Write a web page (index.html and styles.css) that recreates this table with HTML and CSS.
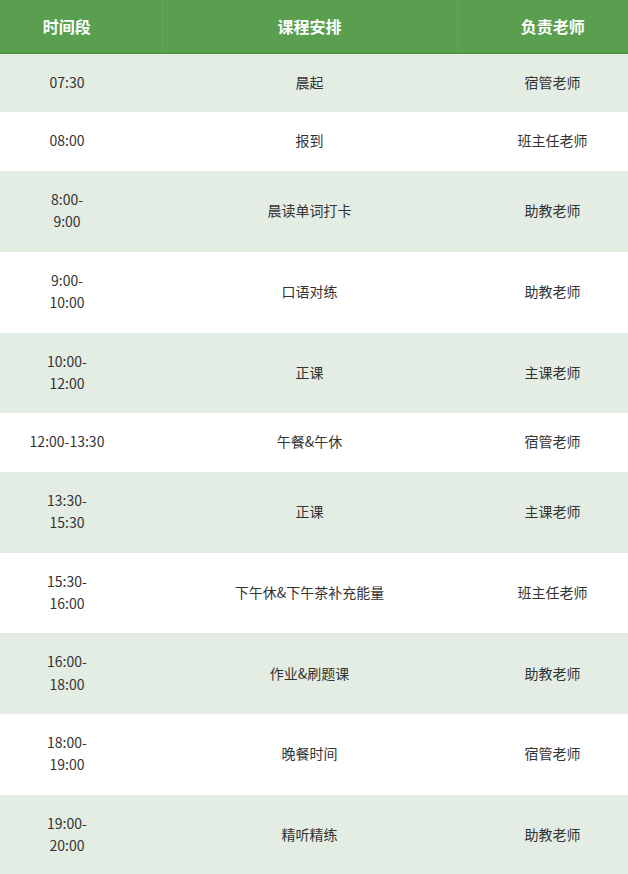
FILE: index.html
```html
<!DOCTYPE html>
<html lang="zh">
<head>
<meta charset="utf-8">
<link rel="stylesheet" href="styles.css">
</head>
<body>
<table class="schedule">
  <colgroup>
    <col class="w1"><col class="w2"><col class="w3">
  </colgroup>
  <thead>
    <tr><th class="c1">时间段</th><th class="c2">课程安排</th><th class="c3">负责老师</th></tr>
  </thead>
  <tbody>
    <tr class="alt"><td class="c1">07:30</td><td class="c2">晨起</td><td class="c3">宿管老师</td></tr>
    <tr><td class="c1">08:00</td><td class="c2">报到</td><td class="c3">班主任老师</td></tr>
    <tr class="alt"><td class="c1">8:00-<br>9:00</td><td class="c2">晨读单词打卡</td><td class="c3">助教老师</td></tr>
    <tr><td class="c1">9:00-<br>10:00</td><td class="c2">口语对练</td><td class="c3">助教老师</td></tr>
    <tr class="alt"><td class="c1">10:00-<br>12:00</td><td class="c2">正课</td><td class="c3">主课老师</td></tr>
    <tr><td class="c1">12:00-13:30</td><td class="c2">午餐&amp;午休</td><td class="c3">宿管老师</td></tr>
    <tr class="alt"><td class="c1">13:30-<br>15:30</td><td class="c2">正课</td><td class="c3">主课老师</td></tr>
    <tr><td class="c1">15:30-<br>16:00</td><td class="c2">下午休&amp;下午茶补充能量</td><td class="c3">班主任老师</td></tr>
    <tr class="alt"><td class="c1">16:00-<br>18:00</td><td class="c2">作业&amp;刷题课</td><td class="c3">助教老师</td></tr>
    <tr><td class="c1">18:00-<br>19:00</td><td class="c2">晚餐时间</td><td class="c3">宿管老师</td></tr>
    <tr class="alt"><td class="c1">19:00-<br>20:00</td><td class="c2">精听精练</td><td class="c3">助教老师</td></tr>
  </tbody>
</table>
</body>
</html>
```
FILE: styles.css
```css
html, body {
  margin: 0;
  padding: 0;
  background: #ffffff;
}
body {
  font-family: "Noto Sans CJK SC", "Noto Sans", sans-serif;
  color: #333333;
}
.schedule {
  width: 628px;
  border-collapse: collapse;
  table-layout: fixed;
}
.w1 { width: 162px; }
.w2 { width: 295px; }
.w3 { width: 171px; }
.schedule th,
.schedule td {
  box-sizing: border-box;
  text-align: center;
  vertical-align: middle;
}
.schedule th {
  background: #5a9f50;
  color: #ffffff;
  font-size: 16px;
  font-weight: bold;
  height: 53px;
  padding: 0 0 1px;
  border-bottom: 2px solid #509447;
  border-left: 1px solid #63a659;
}
.schedule th:first-child {
  border-left: none;
}
.schedule td {
  font-size: 14px;
  line-height: 22.3px;
  padding: 17px 0 19.2px;
}
.schedule tr.alt td {
  background: #e3ede3;
}
.schedule .c1 {
  padding-left: 0;
  padding-right: 28px;
}
.schedule .c2 {
  padding-left: 0;
  padding-right: 0;
}
.schedule .c3 {
  padding-left: 20px;
  padding-right: 0;
}
```
